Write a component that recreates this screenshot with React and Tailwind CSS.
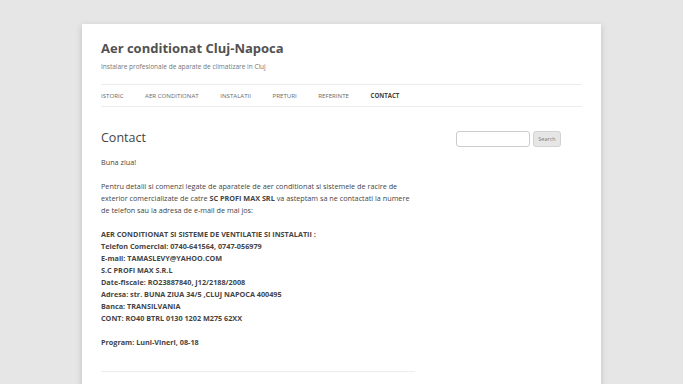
export default function App() {
  const nav = ["Istoric", "Aer conditionat", "Instalatii", "Preturi", "Referinte"];
  return (
    <div className="h-[384px] overflow-hidden bg-[#e6e6e6] pt-[24px] text-[#444]" style={{ fontFamily: '"Open Sans", sans-serif' }}>
      <div className="ml-[82px] w-[519px] bg-white px-[19px] pb-[40px] shadow-[0_2px_6px_rgba(100,100,100,0.3)]">
        <header className="pt-[15px]">
          <h1 className="text-[13px] font-bold leading-[18px] text-[#515151]">Aer conditionat Cluj-Napoca</h1>
          <p className="mt-[5px] text-[6.5px] leading-[10px] text-[#757575]">Instalare profesionale de aparate de climatizare in Cluj</p>
          <nav className="mt-[12px] flex h-[23px] items-center gap-[21.6px] border-y border-[#ededed] text-[6.12px] uppercase text-[#6a6a6a]">
            {nav.map((n) => (
              <span key={n}>{n}</span>
            ))}
            <span className="font-bold text-[#444]">Contact</span>
          </nav>
        </header>
        <div className="mt-[23px] flex">
          <main className="w-[314px] text-[7.25px] leading-[12px]">
            <h2 className="text-[12.5px] leading-[16px] text-[#444]">Contact</h2>
            <p className="mt-[10px]">Buna ziua!</p>
            <p className="mt-[12px]">
              Pentru detalii si comenzi legate de aparatele de aer conditionat si sistemele de racire de exterior comercializate de catre <b>SC PROFI MAX SRL</b> va asteptam sa ne contactati la numere de telefon sau la adresa de e-mail de mai jos:
            </p>
            <p className="mt-[12px] font-bold">
              AER CONDITIONAT SI SISTEME DE VENTILATIE SI INSTALATII :<br />
              Telefon Comercial: 0740-641564, 0747-056979<br />
              E-mail: TAMASLEVY@YAHOO.COM<br />
              S.C PROFI MAX S.R.L<br />
              Date-fiscale: RO23887840, J12/2188/2008<br />
              Adresa: str. BUNA ZIUA 34/5 ,CLUJ NAPOCA 400495<br />
              Banca: TRANSILVANIA<br />
              CONT: RO40 BTRL 0130 1202 M275 62XX
            </p>
            <p className="mt-[12px] font-bold">Program: Luni-Vineri, 08-18</p>
            <div className="h-[24px] border-b border-[#ededed]" />
          </main>
          <aside className="ml-[41px] flex items-start gap-[3px] pt-[1px]">
            <input className="h-[16px] w-[74px] rounded-[3px] border border-[#ccc]" />
            <button className="h-[16px] w-[28px] rounded-[3px] border border-[#d2d2d2] bg-[#e6e6e6] text-[5.5px] text-[#7c7c7c]">Search</button>
          </aside>
        </div>
      </div>
    </div>
  );
}
